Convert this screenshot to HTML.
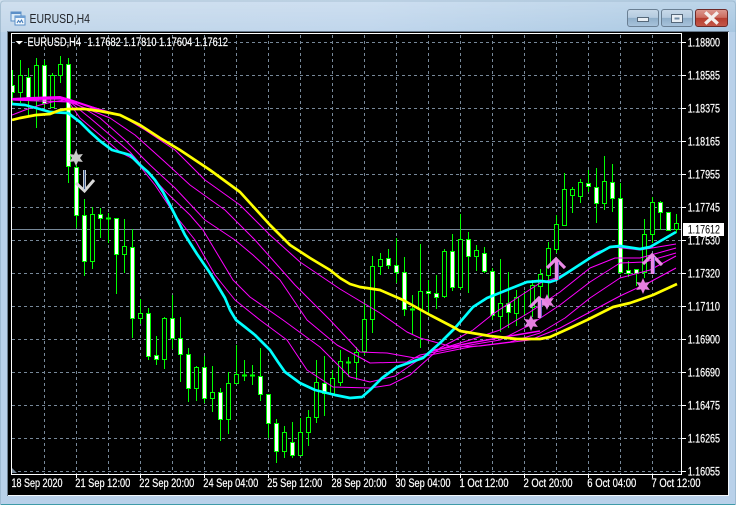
<!DOCTYPE html>
<html>
<head>
<meta charset="utf-8">
<title>EURUSD,H4</title>
<style>
html,body{margin:0;padding:0;width:736px;height:505px;overflow:hidden;background:#b9d1ea}
svg{display:block}
text{font-family:"Liberation Sans",sans-serif}
.t text{stroke:#fff;stroke-width:.22px}
</style>
</head>
<body>
<svg width="736" height="505" viewBox="0 0 736 505" xmlns="http://www.w3.org/2000/svg">
<defs>
<linearGradient id="fr" x1="0" x2="1" y1="0" y2="0"><stop offset="0" stop-color="#c3d7ea"/><stop offset=".5" stop-color="#c0d6ec"/><stop offset="1" stop-color="#a9c8e2"/></linearGradient>
<linearGradient id="tb" x1="0" x2="0" y1="0" y2="1"><stop offset="0" stop-color="#ffffff" stop-opacity=".22"/><stop offset="1" stop-color="#ffffff" stop-opacity="0"/></linearGradient>
<linearGradient id="btn" x1="0" x2="0" y1="0" y2="1"><stop offset="0" stop-color="#c8d9e9"/><stop offset=".48" stop-color="#b4cbe0"/><stop offset=".5" stop-color="#8faec9"/><stop offset="1" stop-color="#a9c4dc"/></linearGradient>
<linearGradient id="cls" x1="0" x2="0" y1="0" y2="1"><stop offset="0" stop-color="#dc9a90"/><stop offset=".48" stop-color="#cc6b5e"/><stop offset=".5" stop-color="#b63d2e"/><stop offset="1" stop-color="#c4594a"/></linearGradient>
<clipPath id="pl"><rect x="12" y="35" width="670" height="439"/></clipPath>
<polygon id="st" points="0,-8 2,-3.400 6.900,-4 4,0 6.900,4 2,3.400 0,8 -2,3.400 -6.900,4 -4,0 -6.900,-4 -2,-3.400"/>
</defs>

<!-- window frame -->
<rect width="736" height="505" fill="#b9d1ea"/>
<rect x="0" y="0" width="736" height="32" fill="url(#fr)"/>
<rect x="0" y="0" width="736" height="32" fill="url(#tb)"/>
<path d="M0.500 505V5Q0.500 1 4 1H732Q735.500 1 735.500 5V505" fill="none" stroke="#8aa9c0" stroke-width="1" opacity=".55"/>
<rect x="1" y="504" width="734" height="1" fill="#3f9aa8"/>

<!-- title icon -->
<rect x="11" y="12" width="10" height="9" fill="#dcecf8" stroke="#5b8fc7"/>
<rect x="11" y="12" width="10" height="2" fill="#5b8fc7"/>
<rect x="15" y="16" width="10" height="9" fill="#f2f8fd" stroke="#5b8fc7"/>
<rect x="15" y="16" width="10" height="2" fill="#6fa0d4"/>
<path d="M17 23l1.500-2.500 1.500 2 1.500-2.500 1.500 3" fill="none" stroke="#3f78b8" stroke-width="1"/>
<text x="29.500" y="23" font-size="13" fill="#23262b" textLength="60.500" lengthAdjust="spacingAndGlyphs">EURUSD,H4</text>

<!-- buttons -->
<rect x="627.500" y="9.500" width="31" height="17" rx="2.500" fill="url(#btn)" stroke="#6a7f93"/>
<rect x="637.500" y="17.500" width="11" height="4" fill="#e8eef4" stroke="#56687a"/>
<rect x="661.500" y="9.500" width="31" height="17" rx="2.500" fill="url(#btn)" stroke="#6a7f93"/>
<rect x="671.500" y="14.500" width="11" height="8" fill="#e8eef4" stroke="#56687a"/>
<rect x="674.500" y="17.500" width="5" height="2" fill="#6f8aa3"/>
<rect x="695.500" y="9.500" width="32" height="17" rx="2.500" fill="url(#cls)" stroke="#6e2a28"/>
<path d="M706.500 13.500l10 9M716.500 13.500l-10 9" stroke="#f4efec" stroke-width="3.400" stroke-linecap="square"/>

<!-- chart client -->
<rect x="7.500" y="31.500" width="721" height="464" fill="#000" stroke="#66788a"/>
<path d="M728.500 32V496M8 495.500H729" stroke="#f3f7fb" stroke-width="1" fill="none"/>
<path d="M7.500 32V495" stroke="#6d7f90" stroke-width="1"/>

<!-- grid -->
<g stroke="#778899" stroke-width="1" stroke-dasharray="3 3" fill="none">
<path d="M12 42.500H682M12 75.500H682M12 108.500H682M12 141.500H682M12 174.500H682M12 207.500H682M12 240.500H682M12 273.500H682M12 306.500H682M12 339.500H682M12 372.500H682M12 405.500H682M12 438.500H682M12 471.500H682"/>
<path d="M44.500 35V474M76.500 35V474M108.500 35V474M140.500 35V474M172.500 35V474M204.500 35V474M236.500 35V474M268.500 35V474M300.500 35V474M332.500 35V474M364.500 35V474M396.500 35V474M428.500 35V474M460.500 35V474M492.500 35V474M524.500 35V474M556.500 35V474M588.500 35V474M620.500 35V474M652.500 35V474"/>
</g>
<path d="M12 229.500H682" stroke="#778899" stroke-width="1"/>
<polygon points="12,468 17,473 12,473" fill="#778899"/>

<g clip-path="url(#pl)">
<!-- wicks -->
<path stroke="#00ff00" stroke-width="1" fill="none" d="M12.500 70V105M20.500 60V103M28.500 68V117M36.500 58V128M44.500 60V107M52.500 73V107M60.500 56V83M68.500 58V183M76.500 165V228M84.500 199V276M92.500 207V269M100.500 208V238M108.500 213V243M116.500 218V294M124.500 219V273M132.500 229V338M140.500 299V324M148.500 308V360M156.500 336V365M164.500 317V369M172.500 295V349M180.500 317V382M188.500 348V402M196.500 366V401M204.500 356V403M212.500 366V412M220.500 388V441M228.500 372V434M236.500 345V383M244.500 360V381M252.500 365V385M260.500 348V401M268.500 394V438M276.500 419V463M284.500 426V458M292.500 422V458M300.500 418V455M308.500 410V446M316.500 360V423M324.500 356V416M332.500 370V393M340.500 350V386M348.500 357V377M356.500 347V380M364.500 302V355M372.500 256V333M380.500 253V275M388.500 249V269M396.500 238V283M404.500 257V316M412.500 295V335M420.500 244V348M428.500 280V313M436.500 275V309M444.500 249V298M452.500 234V291M460.500 214V290M468.500 232V293M476.500 245V271M484.500 247V273M492.500 268V320M500.500 259V332M508.500 272V328M516.500 290V326M524.500 291V316M532.500 280V317M540.500 269V300M548.500 242V300M556.500 215V253M564.500 173V225M572.500 187V213M580.500 179V203M588.500 170V192M596.500 168V223M604.500 156V210M612.500 164V212M620.500 183V274M628.500 261V277M636.500 269V286M644.500 219V278M652.500 197V243M660.500 201V230M668.500 212V231M676.500 214V233"/>
<!-- doji -->
<path stroke="#00ff00" stroke-width="2" fill="none" d="M106 218.500h5M242 375.500h5M250 375.500h5M346 362.500h5M410 309.500h5"/>
<!-- hollow bodies -->
<path fill="#000" stroke="#00ff00" stroke-width="1" d="M18.500 75.500h4V92.500h-4zM34.500 65.500h4V100.500h-4zM50.500 75.500h4V107.500h-4zM58.500 64.500h4V75.500h-4zM90.500 214.500h4V261.500h-4zM122.500 246.500h4V254.500h-4zM138.500 313.500h4V318.500h-4zM162.500 318.500h4V359.500h-4zM194.500 367.500h4V388.500h-4zM210.500 392.500h4V398.500h-4zM226.500 383.500h4V419.500h-4zM234.500 374.500h4V383.500h-4zM282.500 432.500h4V451.500h-4zM298.500 432.500h4V455.500h-4zM306.500 417.500h4V432.500h-4zM314.500 382.500h4V417.500h-4zM330.500 378.500h4V393.500h-4zM338.500 361.500h4V382.500h-4zM354.500 352.500h4V362.500h-4zM362.500 319.500h4V351.500h-4zM370.500 266.500h4V319.500h-4zM378.500 259.500h4V266.500h-4zM418.500 291.500h4V309.500h-4zM442.500 251.500h4V296.500h-4zM458.500 239.500h4V287.500h-4zM474.500 250.500h4V256.500h-4zM498.500 303.500h4V316.500h-4zM514.500 297.500h4V313.500h-4zM530.500 285.500h4V307.500h-4zM538.500 274.500h4V286.500h-4zM546.500 248.500h4V275.500h-4zM554.500 224.500h4V249.500h-4zM562.500 189.500h4V225.500h-4zM570.500 189.500h4V195.500h-4zM578.500 182.500h4V196.500h-4zM602.500 181.500h4V203.500h-4zM642.500 234.500h4V272.500h-4zM650.500 202.500h4V234.500h-4zM674.500 223.500h4V229.500h-4z"/>
<!-- filled bodies -->
<path fill="#fff" stroke="#00ff00" stroke-width="1" d="M10.500 85.500h4V92.500h-4zM26.500 77.500h4V98.500h-4zM42.500 65.500h4V103.500h-4zM66.500 64.500h4V166.500h-4zM74.500 167.500h4V215.500h-4zM82.500 215.500h4V261.500h-4zM98.500 214.500h4V218.500h-4zM114.500 218.500h4V254.500h-4zM130.500 247.500h4V318.500h-4zM146.500 313.500h4V356.500h-4zM154.500 355.500h4V359.500h-4zM170.500 318.500h4V338.500h-4zM178.500 338.500h4V354.500h-4zM186.500 354.500h4V388.500h-4zM202.500 367.500h4V398.500h-4zM218.500 392.500h4V419.500h-4zM258.500 376.500h4V394.500h-4zM266.500 394.500h4V423.500h-4zM274.500 423.500h4V451.500h-4zM290.500 442.500h4V455.500h-4zM322.500 383.500h4V393.500h-4zM386.500 258.500h4V265.500h-4zM394.500 265.500h4V272.500h-4zM402.500 272.500h4V309.500h-4zM426.500 291.500h4V293.500h-4zM434.500 293.500h4V297.500h-4zM450.500 251.500h4V287.500h-4zM466.500 239.500h4V256.500h-4zM482.500 253.500h4V271.500h-4zM490.500 271.500h4V315.500h-4zM506.500 303.500h4V312.500h-4zM586.500 183.500h4V186.500h-4zM594.500 187.500h4V203.500h-4zM610.500 182.500h4V198.500h-4zM618.500 198.500h4V272.500h-4zM626.500 270.500h4V273.500h-4zM634.500 269.500h4V273.500h-4zM658.500 202.500h4V212.500h-4zM666.500 212.500h4V230.500h-4z"/>

<!-- magenta ribbon -->
<g fill="none" stroke="#ff00ff" stroke-width="1" stroke-linejoin="round">
<polyline points="12,100 60,98 68,101 80,118 100,135 120,152 135,160 155,185 175,215 195,240 215,275 235,300 260,320 287,340 307,370 333,387 370,388 390,385 410,375 440,348 455,340 473,330 493,314 517,298 540,283 556,278 575,268 597,252 613,247 640,250 676,244"/>
<polyline points="12,100 60,98 70,102 90,118 110,135 130,152 150,175 167,193 190,215 203,230 233,280 250,297 283,320 320,347 350,377 370,382 395,376 430,352 470,340 500,330 530,312 560,292 590,268 615,258 640,258 676,248"/>
<polyline points="12,100 60,99 75,103 100,118 125,140 150,165 175,188 205,220 235,240 253,255 280,280 307,320 337,345 370,363 407,362 420,355 470,345 500,340 530,325 560,305 590,282 620,263 645,262 676,253"/>
<polyline points="12,100 70,102 110,118 135,135 165,162 190,185 225,210 255,240 295,285 330,320 360,352 387,353 415,358 470,347 510,342 540,333 565,318 590,298 620,278 650,270 676,256"/>
<polyline points="12,100 75,102 120,115 145,130 175,150 205,180 240,205 270,235 300,262 340,289 380,313 407,332 420,338 453,347 480,346 530,340 560,328 590,312 620,296 650,282 676,268"/>
<polyline points="12,115 25,110 40,105 52,102 65,100"/>
</g>
<polyline points="12,99 30,98 60,97 70,100 85,105 100,110" fill="none" stroke="#ff00ff" stroke-width="2"/>
<polyline points="430,351 470,343 510,336 540,331" fill="none" stroke="#ff00ff" stroke-width="1.500"/>

<!-- cyan -->
<polyline fill="none" stroke="#00ffff" stroke-width="2.700" stroke-linejoin="round" points="12,104 25,105 36,108 50,112 68,113 80,122 90,132 100,141 112,150 130,155 140,165 148,172 155,180 163,192 170,205 185,235 197,254 210,273 225,298 230,310 236,320 245,327 255,335 270,350 278,362 285,372 300,383 315,390 335,395 350,398 362,397 370,390 382,378 397,367 423,358 440,343 455,328 473,307 487,298 507,290 527,282 540,281 550,282 556,280 570,271 590,258 610,247 620,246 640,249 650,247 676,232"/>
<!-- yellow -->
<polyline fill="none" stroke="#ffff00" stroke-width="2.700" stroke-linejoin="round" points="12,120 20,118 36,115 50,114 60,110 68,109 85,109 100,111 120,115 130,120 140,125 160,138 180,150 210,170 240,192 250,203 260,214 270,225 280,235 290,245 310,258 330,270 340,278 350,284 360,287 380,290 403,300 430,315 455,328 460,331 490,336 517,339 540,339 550,337 570,328 587,320 613,307 630,303 653,295 677,284"/>

<!-- markers grey -->
<use href="#st" x="76" y="158" fill="#c9c9c9"/>
<path d="M76 183L84.500 191L94 180" fill="none" stroke="#d8d8d8" stroke-width="3"/>
<path d="M84.500 170V190" stroke="#c6ccd6" stroke-width="3"/>
<path d="M84.500 170V189" stroke="#3c5a8c" stroke-width="1"/>

<!-- markers pink -->
<g fill="#e67fe0">
<use href="#st" x="531" y="323"/>
<use href="#st" x="547" y="302"/>
<use href="#st" x="643" y="286"/>
</g>
<g fill="none" stroke="#ea8ae6" stroke-width="3.200">
<path d="M547 268L556 259L565 268"/>
<path d="M530 307L539 298L548 307"/>
<path d="M643 264L652 255L662 265"/>
</g>
<g stroke="#ea8ae6" stroke-width="3.500">
<path d="M556.500 260V280M539.500 298V318M652.500 255V274"/>
</g>
<g stroke="#6d5cc4" stroke-width="1">
<path d="M558.500 262V280M541.500 300V318M654.500 257V274"/>
</g>
</g>

<!-- header info -->
<polygon points="15.500,41 23,41 19.200,44.500" fill="#fff"/>
<g class="t" fill="#fff" font-size="11.500">
<text x="27.500" y="46" textLength="53.500" lengthAdjust="spacingAndGlyphs">EURUSD,H4</text>
<text x="87.500" y="46" textLength="140.500" lengthAdjust="spacingAndGlyphs">1.17682 1.17810 1.17604 1.17612</text>
</g>

<!-- axes -->
<path d="M11.500 34V474.500M11 33.500H682M681.500 33V475M11 474.500H682" stroke="#fff" stroke-width="1" fill="none"/>
<path stroke="#fff" stroke-width="1" d="M682 42.500h4M682 75.500h4M682 108.500h4M682 141.500h4M682 174.500h4M682 207.500h4M682 240.500h4M682 273.500h4M682 306.500h4M682 339.500h4M682 372.500h4M682 405.500h4M682 438.500h4M682 471.500h4"/>
<path stroke="#fff" stroke-width="1" d="M76.500 474v4M140.500 474v4M204.500 474v4M268.500 474v4M332.500 474v4M396.500 474v4M460.500 474v4M524.500 474v4M588.500 474v4M652.500 474v4"/>

<!-- price labels -->
<g class="t" fill="#fff" font-size="11.500">
<text x="687.700" y="46.500" textLength="32.300" lengthAdjust="spacingAndGlyphs">1.18800</text>
<text x="687.700" y="79.500" textLength="32.300" lengthAdjust="spacingAndGlyphs">1.18585</text>
<text x="687.700" y="112.500" textLength="32.300" lengthAdjust="spacingAndGlyphs">1.18375</text>
<text x="687.700" y="145.500" textLength="32.300" lengthAdjust="spacingAndGlyphs">1.18165</text>
<text x="687.700" y="178.500" textLength="32.300" lengthAdjust="spacingAndGlyphs">1.17955</text>
<text x="687.700" y="211.500" textLength="32.300" lengthAdjust="spacingAndGlyphs">1.17745</text>
<text x="687.700" y="244.500" textLength="32.300" lengthAdjust="spacingAndGlyphs">1.17530</text>
<text x="687.700" y="277.500" textLength="32.300" lengthAdjust="spacingAndGlyphs">1.17320</text>
<text x="687.700" y="310.500" textLength="32.300" lengthAdjust="spacingAndGlyphs">1.17110</text>
<text x="687.700" y="343.500" textLength="32.300" lengthAdjust="spacingAndGlyphs">1.16900</text>
<text x="687.700" y="376.500" textLength="32.300" lengthAdjust="spacingAndGlyphs">1.16690</text>
<text x="687.700" y="409.500" textLength="32.300" lengthAdjust="spacingAndGlyphs">1.16475</text>
<text x="687.700" y="442.500" textLength="32.300" lengthAdjust="spacingAndGlyphs">1.16265</text>
<text x="687.700" y="475.500" textLength="32.300" lengthAdjust="spacingAndGlyphs">1.16055</text>
</g>
<rect x="683" y="223" width="41" height="13" fill="#fff"/>
<text x="687.700" y="233.500" fill="#000" font-size="11.500" textLength="32.300" lengthAdjust="spacingAndGlyphs">1.17612</text>

<!-- time labels -->
<g class="t" fill="#fff" font-size="11.500">
<text x="11.500" y="487" textLength="51" lengthAdjust="spacingAndGlyphs">18 Sep 2020</text>
<text x="75.300" y="487" textLength="55" lengthAdjust="spacingAndGlyphs">21 Sep 12:00</text>
<text x="139.300" y="487" textLength="55" lengthAdjust="spacingAndGlyphs">22 Sep 20:00</text>
<text x="203.300" y="487" textLength="55" lengthAdjust="spacingAndGlyphs">24 Sep 04:00</text>
<text x="267.300" y="487" textLength="55" lengthAdjust="spacingAndGlyphs">25 Sep 12:00</text>
<text x="331.500" y="487" textLength="55" lengthAdjust="spacingAndGlyphs">28 Sep 20:00</text>
<text x="395.500" y="487" textLength="55" lengthAdjust="spacingAndGlyphs">30 Sep 04:00</text>
<text x="459.500" y="487" textLength="49" lengthAdjust="spacingAndGlyphs">1 Oct 12:00</text>
<text x="523.500" y="487" textLength="49" lengthAdjust="spacingAndGlyphs">2 Oct 20:00</text>
<text x="587.300" y="487" textLength="49" lengthAdjust="spacingAndGlyphs">6 Oct 04:00</text>
<text x="651.500" y="487" textLength="49" lengthAdjust="spacingAndGlyphs">7 Oct 12:00</text>
</g>
</svg>
</body>
</html>
